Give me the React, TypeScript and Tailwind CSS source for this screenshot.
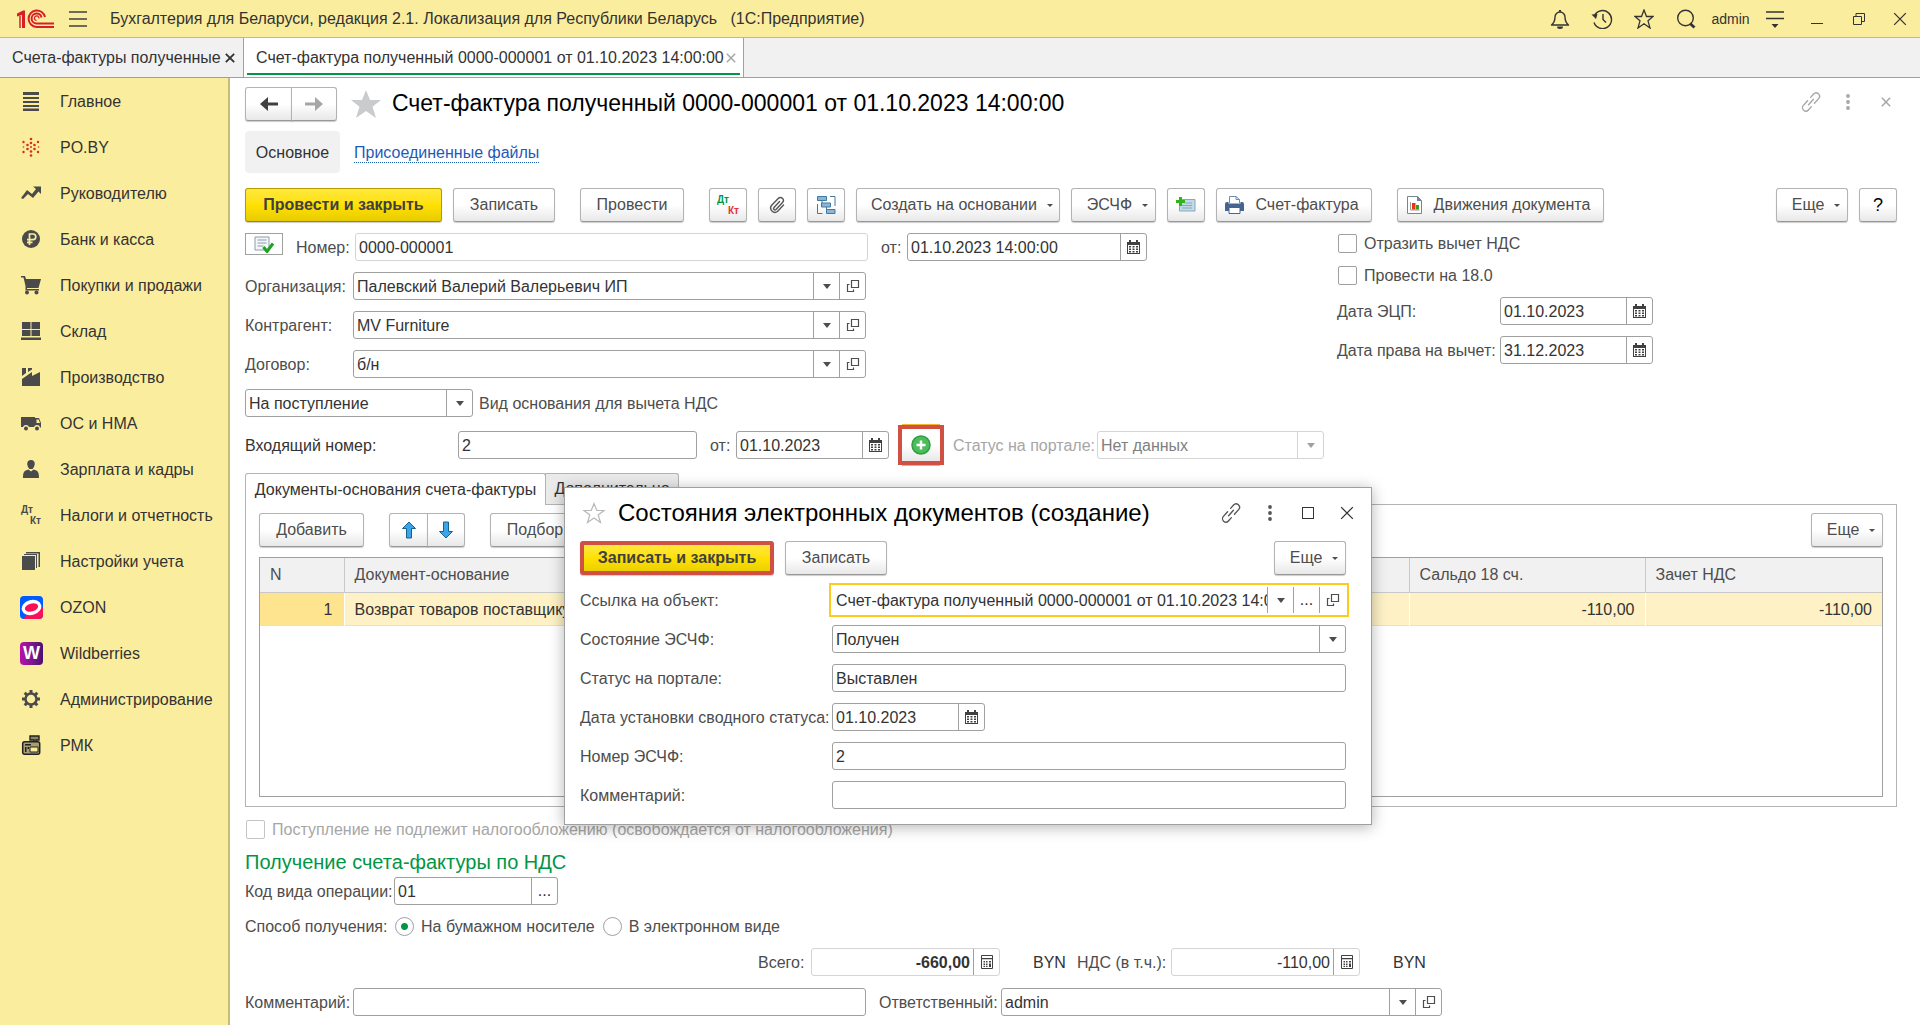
import React, { useId } from "react";
import clsx from "clsx";

type IconProps = { className?: string };

const Caret = ({ className = "text-[#4d4d4d]" }: IconProps) => (
  <svg width="8" height="5" viewBox="0 0 8 5" className={className}>
    <path d="M0 0h8L4 5z" fill="currentColor" />
  </svg>
);

const SmallCaret = () => (
  <svg width="6" height="3" viewBox="0 0 6 3">
    <path d="M0 0h6L3 3z" fill="#4d4d4d" />
  </svg>
);

const OpenIcon = () => (
  <svg width="14" height="14" viewBox="0 0 14 14" fill="none" stroke="#4d4d4d">
    <path d="M5.500 1.500h7v7h-7zM3.500 5.500h-2v7h6v-2" strokeWidth="1.200" />
  </svg>
);

const CalendarIcon = () => (
  <svg width="13" height="14" viewBox="0 0 13 14">
    <path d="M0 2h2V0h2v2h5V0h2v2h2v12H0z" fill="#404040" />
    <path d="M1 5h11v8H1z" fill="#fff" />
    <path d="M2 6h2v1.500H2zM5.500 6h2v1.500h-2zM9 6h2v1.500H9zM2 8.500h2V10H2zM5.500 8.500h2V10h-2zM9 8.500h2V10H9zM2 11h2v1.500H2zM5.500 11h2v1.500h-2zM9 11h2v1.500H9z" fill="#404040" />
  </svg>
);

const CalcIcon = () => (
  <svg width="12" height="14" viewBox="0 0 12 14">
    <path d="M.5.5h11v13H.5z" fill="#fff" stroke="#404040" />
    <path d="M1 3h10v1.200H1zM2.500 6h1.500v1.500H2.500zM5 6h1.500v1.500H5zM8 6h2v1.500H8zM2.500 8.500h1.500V10H2.500zM5 8.500h1.500V10H5zM8 8.500h2v3.500H8zM2.500 10.800h1.500V12H2.500zM5 10.800h1.500V12H5z" fill="#404040" />
  </svg>
);

const LinkIcon = ({ className }: IconProps) => (
  <svg width="22" height="22" viewBox="0 0 24 24" fill="none" stroke="currentColor" strokeWidth="1.500" strokeLinecap="round" className={className}>
    <g transform="rotate(-48 12 12)">
      <path d="M10.500 8.300H3.700a3.700 3.700 0 0 0 0 7.400h4.800" />
      <path d="M13.500 15.700h6.800a3.700 3.700 0 0 0 0-7.400h-4.800" />
      <path d="M8 12h8" />
    </g>
  </svg>
);

const DotsIcon = ({ className }: IconProps) => (
  <svg width="4" height="16" viewBox="0 0 4 16" fill="currentColor" className={className}>
    <circle cx="2" cy="2" r="1.900" />
    <circle cx="2" cy="8" r="1.900" />
    <circle cx="2" cy="14" r="1.900" />
  </svg>
);

const CrossIcon = ({ size = 12, width = 1.4 }: { size?: number; width?: number }) => (
  <svg width={size} height={size} viewBox="0 0 12 12" stroke="currentColor" strokeWidth={width}>
    <path d="M1 1l10 10M11 1L1 11" />
  </svg>
);

const Logo = () => (
  <svg width="38" height="20" viewBox="0 0 38 20" fill="none" stroke="#d81f27">
    <path d="M1 4.500L7 1.500h2V19H6V6L1 7.500z" fill="#d81f27" stroke="none" />
    <path d="M4 7v12" strokeWidth="1.500" />
    <path d="M29 8A8.300 8.300 0 1 0 20.500 18H38" strokeWidth="2" />
    <path d="M25.500 8.500A5 5 0 1 0 20.500 14.500H38" strokeWidth="2" />
    <path d="M23 9.500a2.300 2.300 0 1 0-2.500 2" strokeWidth="1.200" />
  </svg>
);

// ---- sidebar icons ----
const I = ({ children }: { children: React.ReactNode }) => (
  <svg width="24" height="24" viewBox="0 0 24 24" fill="#4a4a4a" className="shrink-0">
    {children}
  </svg>
);

const menu = [
  { name: "Главное", icon: <I><path d="M4 3h16v3H4zM4 8h16v2H4zM4 12h16v2H4zM4 16h16v2H4zM4 19.500h16V22H4z" /></I> },
  {
    name: "PO.BY",
    icon: (
      <I>
        <g fill="#d8301f">
          <circle cx="12" cy="4" r="1.300" /><circle cx="12" cy="8" r="1.300" /><circle cx="12" cy="12" r="1" /><circle cx="12" cy="16.500" r="1.300" /><circle cx="12" cy="20.500" r="1.300" />
          <circle cx="8.500" cy="10" r="1.300" /><circle cx="8.500" cy="14" r="1.300" /><circle cx="15.500" cy="10" r="1.300" /><circle cx="15.500" cy="14" r="1.300" />
          <circle cx="4.500" cy="7" r="1.200" /><circle cx="19" cy="7" r="1.200" /><circle cx="4.500" cy="17" r="1.200" /><circle cx="19" cy="17" r="1.200" />
          <circle cx="4.500" cy="12" r=".8" /><circle cx="19.500" cy="12" r=".8" />
        </g>
      </I>
    ),
  },
  { name: "Руководителю", icon: <I><path d="M2 17l6-8 5 4 4-5-3-2.500h8V13l-2.500-2.500L14 17l-5-4-5 5z" /></I> },
  { name: "Банк и касса", icon: <I><circle cx="12" cy="12" r="9" /><path d="M10.500 18V7h3.500a2.800 2.800 0 0 1 0 5.600H8M8 15.300h5.500" fill="none" stroke="#fbed9e" strokeWidth="1.700" /></I> },
  { name: "Покупки и продажи", icon: <I><path d="M2 3h4l1 3h15l-2.500 9H8v1h12v1.500H6.500V13L4.500 4.500H2z" /><circle cx="8" cy="19.500" r="2" /><circle cx="17.500" cy="19.500" r="2" /></I> },
  { name: "Склад", icon: <I><path d="M3 3h8.500v7H3zM12.500 3h8.500v7h-8.500zM3 11h8.500v6H3zM12.500 11h8.500v6h-8.500zM2 18.500h20V21H2z" /></I> },
  { name: "Производство", icon: <I><path d="M3 21v-7l10-7v4l8-4v14zM3 3h4v5l-4 3zM9 3h4v1.500L9 7z" /></I> },
  { name: "ОС и НМА", icon: <I><path d="M2 6h14v10H2zM16 7h4l2 5v4.500h-6zM17.500 8.500V12H21l-1.300-3.500z" fillRule="evenodd" /><circle cx="7" cy="17" r="3" fill="#fbed9e" /><circle cx="18" cy="17" r="3" fill="#fbed9e" /><circle cx="7" cy="17.500" r="2" /><circle cx="18" cy="17.500" r="2" /></I> },
  { name: "Зарплата и кадры", icon: <I><path d="M12 3c5 0 4.500 6 1.500 9h-3C7.500 9 7 3 12 3zM4 21c0-6 1-7.500 5.500-8.500L12 14.500l2.500-2C19 13.500 20 15 20 21z" /></I> },
  {
    name: "Налоги и отчетность",
    icon: (
      <span className="flex w-6 shrink-0 flex-col px-0.5 text-[10px] leading-[11px] font-bold text-[#4a4a4a]">
        <span>Дт</span>
        <span className="self-end">Кт</span>
      </span>
    ),
  },
  { name: "Настройки учета", icon: <I><path d="M3 7h13v14H3zM5 5h13v14h-1V6H5zM7 3h14v15h-1.500V4.500H7z" /></I> },
  {
    name: "OZON",
    icon: (
      <I>
        <rect x="1" y="1" width="23" height="23" rx="4" fill="#005bff" />
        <path d="M24 12v8a4 4 0 0 1-4 4H5c0-5 11-9 19-12z" fill="#f91155" />
        <ellipse cx="12.500" cy="12.500" rx="10" ry="7.500" transform="rotate(-15 12.500 12.500)" fill="#fff" />
        <ellipse cx="12.500" cy="12.500" rx="6.800" ry="4" transform="rotate(-15 12.500 12.500)" fill="#f91155" />
      </I>
    ),
  },
  {
    name: "Wildberries",
    icon: (
      <span className="ml-px flex h-[23px] w-[23px] shrink-0 items-center justify-center rounded bg-linear-to-r from-[#b80fa8] to-[#4b1173] text-lg font-bold text-white">W</span>
    ),
  },
  {
    name: "Администрирование",
    icon: (
      <I>
        <g stroke="#4a4a4a" strokeWidth="3"><path d="M12 3v4M12 17v4M3 12h4M17 12h4M5.700 5.700l2.500 2.500M15.800 15.800l2.500 2.500M18.300 5.700l-2.500 2.500M8.200 15.800l-2.500 2.500" /></g>
        <circle cx="12" cy="12" r="5.500" fill="#fbed9e" stroke="#4a4a4a" strokeWidth="2.500" />
      </I>
    ),
  },
  {
    name: "РМК",
    icon: (
      <I>
        <path d="M11 3h9v4h-3v2h-2V7h-4z" fill="#8d8560" stroke="#222" strokeWidth="1.400" />
        <rect x="3.700" y="8.700" width="17" height="12.500" rx="2" fill="#a89f70" stroke="#222" strokeWidth="1.500" />
        <path d="M6 11h6v1.500H6zM6 14h1.500v5H6zM8.500 14H10v2H8.500z" fill="#222" />
        <path d="M11 14h8v5h-8z" fill="#fbed9e" stroke="#222" />
      </I>
    ),
  },
];

const tones = {
  plain: "border border-[#b3b3b3] border-b-[#989898] from-white from-50% to-[#e8e8e8] text-[#4d4d4d]",
  main: "border border-[#b39b00] border-b-[#9c8700] from-[#ffe838] via-[#ffe100] to-[#e8cb00] font-bold text-[#404040]",
  marked: "border-4 border-[#d15044] from-[#ffe838] via-[#ffe100] to-[#ecd000] font-bold text-[#404040]",
};

const Button = ({ className, tone = "plain", ...rest }: React.ComponentProps<"button"> & { tone?: keyof typeof tones }) => (
  <button
    type="button"
    className={clsx(
      "flex h-[34px] shrink-0 items-center justify-center rounded-[3px] bg-linear-to-b text-base whitespace-nowrap shadow-[0_1px_1px_rgba(0,0,0,0.2)]",
      tones[tone],
      className
    )}
    {...rest}
  />
);

const MoreButton = () => (
  <Button className="w-[72px] gap-2.5 pl-2">
    Еще <SmallCaret />
  </Button>
);

type FieldProps = {
  label: string;
  value?: string;
  kind?: "input" | "select";
  labelClass?: string;
  boxClass?: string;
  inputClass?: string;
  tools?: ("caret" | "open" | "date" | "calc" | "dots")[];
  muted?: boolean;
  focused?: boolean;
};

const toolNames = { caret: "Выбрать", open: "Открыть", date: "Календарь", calc: "Калькулятор", dots: "Показать все" };

const Field = ({ label, value = "", kind = "input", labelClass, boxClass, inputClass = "text-[#333]", tools = [], muted, focused }: FieldProps) => {
  const id = useId();
  const inner = "h-full min-w-0 flex-1 appearance-none bg-transparent pt-0.5 pl-[3px] text-base outline-none";
  return (
    <>
      <label htmlFor={id} className={clsx("shrink-0 pt-0.5 whitespace-nowrap", labelClass)}>
        {label}
      </label>
      <div
        className={clsx(
          "flex h-7 overflow-hidden border bg-white",
          focused ? "border-white outline-2 outline-offset-1 outline-[#fccb1b]" : "rounded-[3px]",
          !focused && (muted ? "border-[#d4d4d4]" : "border-[#a0a0a0]"),
          boxClass
        )}
      >
        {kind === "select" ? (
          <select id={id} className={clsx(inner, inputClass)}>
            <option>{value}</option>
          </select>
        ) : (
          <input id={id} type="text" defaultValue={value} className={clsx(inner, inputClass)} />
        )}
        {tools.map((tool) => (
          <button
            key={tool}
            type="button"
            aria-label={toolNames[tool]}
            className={clsx(
              "flex h-full w-[26px] shrink-0 items-center justify-center border-l",
              muted && tool === "caret" ? "border-[#d4d4d4]" : "border-[#a0a0a0]"
            )}
          >
            {tool === "caret" && <Caret className={muted ? "text-[#a0a0a0]" : "text-[#4d4d4d]"} />}
            {tool === "open" && <OpenIcon />}
            {tool === "date" && <CalendarIcon />}
            {tool === "calc" && <CalcIcon />}
            {tool === "dots" && <span className="text-[#333]">...</span>}
          </button>
        ))}
      </div>
    </>
  );
};

const Check = ({ label, disabled }: { label: string; disabled?: boolean }) => (
  <label className={clsx("flex h-5 items-center gap-[7px]", disabled && "text-[#a6a6a6]")}>
    <input
      type="checkbox"
      disabled={disabled}
      className={clsx("ml-px h-[19px] w-[19px] appearance-none rounded-[2px] border bg-white", disabled ? "border-[#c4c4c4]" : "border-[#a0a0a0]")}
    />
    <span className="pt-0.5">{label}</span>
  </label>
);

const Radio = ({ label, checked }: { label: string; checked?: boolean }) => (
  <label className="flex items-center gap-[7px]">
    <input
      type="radio"
      name="receive"
      defaultChecked={checked}
      className="h-[19px] w-[19px] appearance-none rounded-full border border-[#a0a0a0] bg-white checked:bg-[radial-gradient(circle,#009646_3px,#fff_4px)]"
    />
    <span className="pt-0.5">{label}</span>
  </label>
);

const TopBar = () => {
  const item = "flex h-full w-[42px] items-center justify-center";
  return (
    <header className="flex h-[38px] items-center border-b border-[#c9bc6b] bg-[#fbed9e] text-[#333]">
      <div className="ml-4">
        <Logo />
      </div>
      <button type="button" aria-label="Меню" className="ml-[15px]">
        <svg width="18" height="16" viewBox="0 0 18 16" stroke="#404040" strokeWidth="1.500">
          <path d="M0 1h18M0 8h18M0 15h18" />
        </svg>
      </button>
      <div className="ml-[23px] flex-1 text-base whitespace-pre">Бухгалтерия для Беларуси, редакция 2.1. Локализация для Республики Беларусь   (1С:Предприятие)</div>
      <button type="button" aria-label="Уведомления" className={item}>
        <svg width="20" height="20" viewBox="0 0 20 20" fill="none" stroke="#333" strokeWidth="1.400">
          <path d="M1.500 16c3-2.500 3.500-5 3.500-8a5 5 0 0 1 10 0c0 3 .5 5.500 3.500 8z" strokeLinejoin="round" />
          <path d="M10 1v2" strokeWidth="2" />
          <path d="M7 17.500h6a3 2.500 0 0 1-6 0z" fill="#333" stroke="none" />
        </svg>
      </button>
      <button type="button" aria-label="История" className={item}>
        <svg width="22" height="20" viewBox="0 0 22 20" fill="none" stroke="#333" strokeWidth="1.400">
          <path d="M3.500 6.500A9 9 0 1 1 3 13.500M12 5v5.500l3 3" />
          <path d="M.5 5.500l6-.5-1.500 5z" fill="#333" stroke="none" />
        </svg>
      </button>
      <button type="button" aria-label="Избранное" className={item}>
        <svg width="20" height="20" viewBox="0 0 20 20" fill="none" stroke="#333" strokeWidth="1.300">
          <path d="M10 1l2.500 6.500h6.500l-5 4.300 2 7.200-6-4.200L4 19l2-7.200-5-4.300h6.500z" />
        </svg>
      </button>
      <button type="button" aria-label="Поиск" className={item}>
        <svg width="20" height="20" viewBox="0 0 20 20" fill="none" stroke="#333">
          <circle cx="9.500" cy="9" r="7.800" strokeWidth="1.400" />
          <path d="M14 14.500l4.500 4" strokeWidth="2.800" />
        </svg>
      </button>
      <div className="w-[47px] text-center text-sm">admin</div>
      <button type="button" aria-label="Настройки" className={item}>
        <svg width="18" height="18" viewBox="0 0 18 18" stroke="#333" strokeWidth="1.500">
          <path d="M0 2h18M0 8.500h18" />
          <path d="M5.500 14h7L9 18z" fill="#333" stroke="none" />
        </svg>
      </button>
      <button type="button" aria-label="Свернуть" className={item}>
        <svg width="12" height="12" viewBox="0 0 12 12" stroke="#333">
          <path d="M0 10.500h12" />
        </svg>
      </button>
      <button type="button" aria-label="Развернуть" className={item}>
        <svg width="12" height="12" viewBox="0 0 12 12" stroke="#333" fill="none">
          <path d="M.5 3.500h8v8h-8zM3 3.500v-3h8.500v8h-3" />
        </svg>
      </button>
      <button type="button" aria-label="Закрыть" className="flex h-full w-10 items-center justify-center">
        <CrossIcon size={14} width={1.1} />
      </button>
    </header>
  );
};

const TabBar = () => (
  <nav className="flex h-10 border-b border-[#a0a0a0] bg-[#f1f1f1] text-base whitespace-nowrap text-[#333]">
    <div className="flex w-[244px] items-center justify-between border-r border-[#a0a0a0] pr-2 pl-3">
      <a href="#list">Счета-фактуры полученные</a>
      <button type="button" aria-label="Закрыть">
        <CrossIcon size={10} width={2.2} />
      </button>
    </div>
    <div className="flex w-[500px] border-r border-[#a0a0a0] bg-white px-[3px] pb-0.5">
      <div className="flex flex-1 items-center justify-between border-b-2 border-[#009646] pt-1 pr-1 pl-[9px]">
        <a href="#doc">Счет-фактура полученный 0000-000001 от 01.10.2023 14:00:00</a>
        <button type="button" aria-label="Закрыть" className="text-[#a6a6a6]">
          <CrossIcon size={10} width={1.8} />
        </button>
      </div>
    </div>
  </nav>
);

const Sidebar = () => (
  <aside className="w-[230px] shrink-0 border-r-2 border-[#c9bc7a] bg-[#fbed9e]">
    {menu.map((m) => (
      <a key={m.name} href="#section" className="flex h-[46px] items-center gap-[17px] pl-[19px] whitespace-nowrap text-[#333]">
        {m.icon}
        <span className="pt-0.5">{m.name}</span>
      </a>
    ))}
  </aside>
);

const Toolbar = () => (
  <div className="mt-[15px] flex">
    <Button tone="main" className="w-[197px]">Провести и закрыть</Button>
    <Button className="ml-[11px] w-[102px]">Записать</Button>
    <Button className="ml-[25px] w-[104px]">Провести</Button>
    <Button className="ml-[25px] w-[38px]" aria-label="Показать проводки">
      <span className="flex w-[22px] flex-col text-left text-[10px] leading-[11px] font-bold">
        <span className="text-[#009646]">Дт</span>
        <span className="self-end text-[#e63232]">Кт</span>
      </span>
    </Button>
    <Button className="ml-[11px] w-[38px]" aria-label="Файлы">
      <svg width="18" height="18" viewBox="0 0 18 18" fill="none" stroke="#555" strokeWidth="1.400" strokeLinecap="round">
        <path d="M11.500 5.500l-5.500 6a1.400 1.400 0 0 0 2 2l6.500-7a2.900 2.900 0 0 0-4.300-4L3.500 9.500a4.300 4.300 0 0 0 6 6l6-6.500" />
      </svg>
    </Button>
    <Button className="ml-[11px] w-[38px]" aria-label="Связанные документы">
      <svg width="19" height="18" viewBox="0 0 19 18" fill="#8db4d2" stroke="#4179a5">
        <path d="M5 5v4M9.500 11v4.500M.5 8v9.500h5M13 .5h5V10" fill="none" />
        <path d="M.5.500h9v4h-9zM4.500 7h9v4h-9zM9.500 13.500h8.500v4H9.500z" />
      </svg>
    </Button>
    <Button className="ml-[11px] w-[204px] gap-2.5 pl-2">
      Создать на основании <SmallCaret />
    </Button>
    <Button className="ml-[11px] w-[85px] gap-2.5 pl-2">
      ЭСЧФ <SmallCaret />
    </Button>
    <Button className="ml-[11px] w-[38px]" aria-label="Добавить">
      <svg width="20" height="16" viewBox="0 0 20 16">
        <path d="M3.500 2.500h15.500v11.500h-15.500z" fill="#c3dbe8" stroke="#8aa7b8" />
        <path d="M9 6h7M6 8.500h10M6 11h10" stroke="#8aa7b8" />
        <path d="M3 0h3v3h3v3H6v3H3V6H0V3h3z" fill="#2eb51a" />
      </svg>
    </Button>
    <Button className="ml-[11px] w-[156px] gap-[11px] pr-1">
      <svg width="19" height="18" viewBox="0 0 19 18">
        <path d="M4.500 7V.5h6.500l3.500 3V7" fill="#fff" stroke="#6f8db3" />
        <path d="M11 .5v3h3.500" fill="none" stroke="#6f8db3" />
        <path d="M0 8a2 2 0 0 1 2-2h1.500v1.500h12V6H17a2 2 0 0 1 2 2v7H0z" fill="#44658f" />
        <path d="M4 11.500h11v6H4z" fill="#fff" stroke="#44658f" />
      </svg>
      Счет-фактура
    </Button>
    <Button className="ml-[25px] w-[207px] gap-3 pr-1">
      <svg width="15" height="18" viewBox="0 0 15 18">
        <path d="M.5.500h10l4 4v13H.5z" fill="#fff" stroke="#6f8797" />
        <path d="M10 .5h1l3.500 4V5H10z" fill="#6f8797" />
        <path d="M3.500 6v8h9" fill="none" stroke="#9a9a9a" />
        <path d="M5 7h3.500v6.500H5z" fill="#e8341c" />
        <path d="M9 9h3v4.500H9z" fill="#3f9c1b" />
      </svg>
      Движения документа
    </Button>
    <div className="flex-1" />
    <MoreButton />
    <Button className="ml-[11px] w-[38px]" aria-label="Справка">
      <span className="text-lg text-black">?</span>
    </Button>
  </div>
);

const Requisites = () => (
  <div className="mt-[11px] flex">
    <div className="flex flex-1 flex-col gap-[11px]">
      <div className="flex items-center">
        <button type="button" aria-label="Проведен" className="flex h-[22px] w-[38px] items-center justify-center self-start border border-[#a0a0a0]">
          <svg width="20" height="17" viewBox="0 0 20 17">
            <path d="M1 1h14v13H1z" fill="#f4f7fa" stroke="#8b9bab" />
            <path d="M3.500 4h9M3.500 7h9M3.500 10h6" stroke="#8b9bab" />
            <path d="M9.500 11l3.500 4.500L19 7.500" fill="none" stroke="#1fa31f" strokeWidth="3" />
          </svg>
        </button>
        <Field label="Номер:" value="0000-000001" labelClass="ml-[13px] w-[59px]" boxClass="w-[513px]" muted />
        <Field label="от:" value="01.10.2023 14:00:00" labelClass="ml-[13px] w-[26px]" boxClass="w-[240px]" tools={["date"]} />
      </div>
      <div className="flex items-center">
        <Field label="Организация:" value="Палевский Валерий Валерьевич ИП" kind="select" labelClass="w-[108px]" boxClass="w-[513px]" tools={["caret", "open"]} />
      </div>
      <div className="flex items-center">
        <Field label="Контрагент:" value="MV Furniture" kind="select" labelClass="w-[108px]" boxClass="w-[513px]" tools={["caret", "open"]} />
      </div>
      <div className="flex items-center">
        <Field label="Договор:" value="б/н" kind="select" labelClass="w-[108px]" boxClass="w-[513px]" tools={["caret", "open"]} />
      </div>
      <div className="flex flex-row-reverse items-center justify-end">
        <Field label="Вид основания для вычета НДС" value="На поступление" kind="select" labelClass="ml-1.5" boxClass="w-[228px]" tools={["caret"]} />
      </div>
    </div>
    <div className="flex w-[560px] flex-col">
      <Check label="Отразить вычет НДС" />
      <div className="mt-3">
        <Check label="Провести на 18.0" />
      </div>
      <div className="mt-3 flex items-center">
        <Field label="Дата ЭЦП:" value="01.10.2023" labelClass="w-[163px]" boxClass="w-[153px]" tools={["date"]} />
      </div>
      <div className="mt-[11px] flex items-center">
        <Field label="Дата права на вычет:" value="31.12.2023" labelClass="w-[163px]" boxClass="w-[153px]" tools={["date"]} />
      </div>
    </div>
  </div>
);

const Incoming = () => (
  <div className="mt-3.5 flex h-7 items-center">
    <Field label="Входящий номер:" value="2" labelClass="w-[213px] text-[#333]" boxClass="w-[239px]" />
    <Field label="от:" value="01.10.2023" labelClass="ml-[13px] w-[26px]" boxClass="w-[153px]" tools={["date"]} />
    <button
      type="button"
      aria-label="Создать"
      className="mx-[13px] flex h-8 w-[38px] items-center justify-center bg-linear-to-b from-white from-50% to-[#e8e8e8] shadow-[0_5px_0_#f5b52c,0_-5px_0_#f5b52c] outline-4 outline-[#d15044]"
    >
      <svg width="20" height="20" viewBox="0 0 20 20">
        <circle cx="10" cy="10" r="9" fill="#4dbd5c" stroke="#2f9e44" strokeWidth="1.500" />
        <path d="M10 5.500v9M5.500 10h9" stroke="#fff" strokeWidth="2.500" />
      </svg>
    </button>
    <Field label="Статус на портале:" value="Нет данных" kind="select" labelClass="w-[144px] text-[#a6a6a6]" boxClass="w-[227px]" inputClass="text-[#808080]" tools={["caret"]} muted />
  </div>
);

const Documents = () => (
  <>
    <div className="mt-3.5 flex h-[31px] text-[#333]">
      <button type="button" className="z-10 -mb-px w-[301px] rounded-t-[3px] border border-b-0 border-[#b3b3b3] bg-white whitespace-nowrap">
        Документы-основания счета-фактуры
      </button>
      <button type="button" className="-ml-px w-[134px] rounded-tr-[3px] border border-b-0 border-[#b3b3b3] bg-[#eaeaea]">
        Дополнительно
      </button>
    </div>
    <div className="flex flex-1 flex-col border border-[#b3b3b3] px-[13px] pt-2 pb-[9px]">
      <div className="flex">
        <Button className="w-[105px]">Добавить</Button>
        <Button className="ml-[25px] w-[39px] rounded-r-none" aria-label="Переместить вверх">
          <svg width="16" height="18" viewBox="0 0 16 18" fill="#3ba5e8" stroke="#17618f">
            <path d="M8 1l6.500 6.500h-4V17h-5V7.500h-4z" />
          </svg>
        </Button>
        <Button className="-ml-px w-[38px] rounded-l-none" aria-label="Переместить вниз">
          <svg width="16" height="18" viewBox="0 0 16 18" fill="#3ba5e8" stroke="#17618f">
            <path d="M8 17l6.500-6.500h-4V1h-5v9.500h-4z" />
          </svg>
        </Button>
        <Button className="ml-[25px] w-[90px]">Подбор</Button>
        <div className="flex-1" />
        <MoreButton />
      </div>
      <div className="mt-2.5 min-h-[120px] flex-1 border border-[#a0a0a0]">
        <table className="w-full table-fixed border-collapse">
          <thead>
            <tr className="h-[34px] border-b border-[#c8c8c8] bg-[#f1f1f1] text-left text-[#4d4d4d]">
              <th className="w-[84px] border-r border-[#c8c8c8] pl-2.5 font-normal">N</th>
              <th className="border-r border-[#c8c8c8] pl-2.5 font-normal">Документ-основание</th>
              <th className="w-[236px] border-r border-[#c8c8c8] pl-2.5 font-normal">Сальдо 18 сч.</th>
              <th className="w-[237px] pl-2.5 font-normal">Зачет НДС</th>
            </tr>
          </thead>
          <tbody>
            <tr className="h-[33px] border-b border-[#e0e0e0] bg-[#fdf1c5] text-[#333]">
              <td className="border-r border-white bg-[#ffe48f] pt-0.5 pr-[11px] text-right">1</td>
              <td className="border-r border-white pt-0.5 pl-2.5">Возврат товаров поставщику</td>
              <td className="border-r border-white pt-0.5 pr-2.5 text-right">-110,00</td>
              <td className="pt-0.5 pr-2.5 text-right">-110,00</td>
            </tr>
          </tbody>
        </table>
      </div>
    </div>
  </>
);

const Footer = () => (
  <>
    <div className="mt-3">
      <Check label="Поступление не подлежит налогообложению (освобождается от налогообложения)" disabled />
    </div>
    <h2 className="mt-3 text-xl leading-[22px] text-[#009646]">Получение счета-фактуры по НДС</h2>
    <div className="mt-1 flex items-center">
      <Field label="Код вида операции:" value="01" labelClass="w-[149px]" boxClass="w-[164px]" tools={["dots"]} />
    </div>
    <div className="mt-[11px] flex h-5 items-center" role="radiogroup">
      <span className="w-[150px] pt-0.5">Способ получения:</span>
      <Radio label="На бумажном носителе" checked />
      <div className="w-2" />
      <Radio label="В электронном виде" />
    </div>
    <div className="mt-3 flex items-center pl-[513px]">
      <Field label="Всего:" value="-660,00" labelClass="w-[53px]" boxClass="w-[189px]" inputClass="pr-[3px] text-right font-bold text-[#333]" tools={["calc"]} muted />
      <span className="ml-[33px] w-11 pt-0.5 text-[#333]">BYN</span>
      <Field label="НДС (в т.ч.):" value="-110,00" labelClass="w-[94px]" boxClass="w-[189px]" inputClass="pr-[3px] text-right text-[#333]" tools={["calc"]} muted />
      <span className="ml-[33px] pt-0.5 text-[#333]">BYN</span>
    </div>
    <div className="mt-3 flex items-center">
      <Field label="Комментарий:" labelClass="w-[108px]" boxClass="w-[513px]" />
      <Field label="Ответственный:" value="admin" kind="select" labelClass="ml-[13px] w-[122px]" boxClass="w-[441px]" tools={["caret", "open"]} />
    </div>
  </>
);

const StatusDialog = () => (
  <div role="dialog" aria-labelledby="dialog-title" className="absolute top-[409px] left-[334px] z-20 w-[808px] border border-[#a0a0a0] bg-white pr-[25px] pb-[15px] pl-[15px] shadow-[0_2px_14px_rgba(0,0,0,0.3)]">
    <div className="flex h-[53px] items-center pb-1">
      <svg width="24" height="22" viewBox="0 0 24 22" fill="none" stroke="#b8b8b8" strokeWidth="1.200" className="ml-0.5">
        <path d="M12 1.500l2.800 7H22l-5.800 4.500 2.300 7.500L12 16l-6.500 4.500L7.800 13 2 8.500h7.200z" />
      </svg>
      <h2 id="dialog-title" className="ml-3 flex-1 text-2xl text-black">Состояния электронных документов (создание)</h2>
      <div className="-mr-2 flex items-center text-[#555]">
        <button type="button" aria-label="Ссылка"><LinkIcon /></button>
        <button type="button" aria-label="Ещё" className="ml-[26px]"><DotsIcon /></button>
        <button type="button" aria-label="Развернуть" className="ml-[30px] h-3 w-3 border border-[#333]" />
        <button type="button" aria-label="Закрыть" className="ml-[26px] text-[#333]"><CrossIcon size={14} width={1.1} /></button>
      </div>
    </div>
    <div className="flex">
      <Button tone="marked" className="w-[194px]">Записать и закрыть</Button>
      <Button className="ml-[11px] w-[102px]">Записать</Button>
      <div className="flex-1" />
      <MoreButton />
    </div>
    <div className="mt-[11px] flex flex-col gap-[11px]">
      <div className="flex items-center">
        <Field label="Ссылка на объект:" value="Счет-фактура полученный 0000-000001 от 01.10.2023 14:00:00" labelClass="w-[252px]" boxClass="flex-1" tools={["caret", "dots", "open"]} focused />
      </div>
      <div className="flex items-center">
        <Field label="Состояние ЭСЧФ:" value="Получен" kind="select" labelClass="w-[252px]" boxClass="flex-1" tools={["caret"]} />
      </div>
      <div className="flex items-center">
        <Field label="Статус на портале:" value="Выставлен" labelClass="w-[252px]" boxClass="flex-1" />
      </div>
      <div className="flex items-center">
        <Field label="Дата установки сводного статуса:" value="01.10.2023" labelClass="w-[252px]" boxClass="w-[153px]" tools={["date"]} />
      </div>
      <div className="flex items-center">
        <Field label="Номер ЭСЧФ:" value="2" labelClass="w-[252px]" boxClass="flex-1" />
      </div>
      <div className="flex items-center">
        <Field label="Комментарий:" labelClass="w-[252px]" boxClass="flex-1" />
      </div>
    </div>
  </div>
);

export default function App() {
  return (
    <div className="flex min-h-screen flex-col bg-white font-['Liberation_Sans',Arial,sans-serif] text-base leading-5 text-[#4d4d4d]">
      <TopBar />
      <TabBar />
      <div className="flex flex-1">
        <Sidebar />
        <main className="relative flex min-w-0 flex-1 flex-col pt-2.5 pr-[23px] pb-[9px] pl-[15px]">
          <div className="flex h-[31px] items-center">
            <Button className="h-[31px] w-[47px] rounded-r-none" aria-label="Назад">
              <svg width="18" height="14" viewBox="0 0 18 14" fill="#404040">
                <path d="M0 7l8-7v5.500h10v3H8V14z" />
              </svg>
            </Button>
            <Button className="-ml-px h-[31px] w-[46px] rounded-l-none" aria-label="Вперед">
              <svg width="18" height="14" viewBox="0 0 18 14" fill="#a6a6a6">
                <path d="M18 7l-8-7v5.500H0v3h10V14z" />
              </svg>
            </Button>
            <svg width="30" height="28" viewBox="0 0 30 28" fill="#c9cbcd" className="ml-3.5">
              <path d="M15 0l4 10h11l-8.500 6.700L25 28l-10-7-10 7 3.500-11.300L0 10h11z" />
            </svg>
            <h1 className="ml-[11px] flex-1 pb-0.5 text-[23px] text-black">Счет-фактура полученный 0000-000001 от 01.10.2023 14:00:00</h1>
            <div className="flex items-center pr-1.5 pb-1 text-[#a6a6a6]">
              <button type="button" aria-label="Ссылка"><LinkIcon /></button>
              <button type="button" aria-label="Ещё" className="ml-6"><DotsIcon /></button>
              <button type="button" aria-label="Закрыть" className="ml-[31px]"><CrossIcon size={10} width={1.8} /></button>
            </div>
          </div>
          <nav className="mt-3 flex h-[42px] items-center">
            <a href="#main" className="flex h-full w-[95px] items-center justify-center rounded bg-[#f1f1f1] pt-0.5 text-[#333]">Основное</a>
            <a href="#files" className="ml-3.5 border-b border-dotted border-[#1a5fb4] pt-0.5 leading-[18px] text-[#1f5ab8]">Присоединенные файлы</a>
          </nav>
          <Toolbar />
          <Requisites />
          <Incoming />
          <Documents />
          <Footer />
          <StatusDialog />
        </main>
      </div>
    </div>
  );
}
